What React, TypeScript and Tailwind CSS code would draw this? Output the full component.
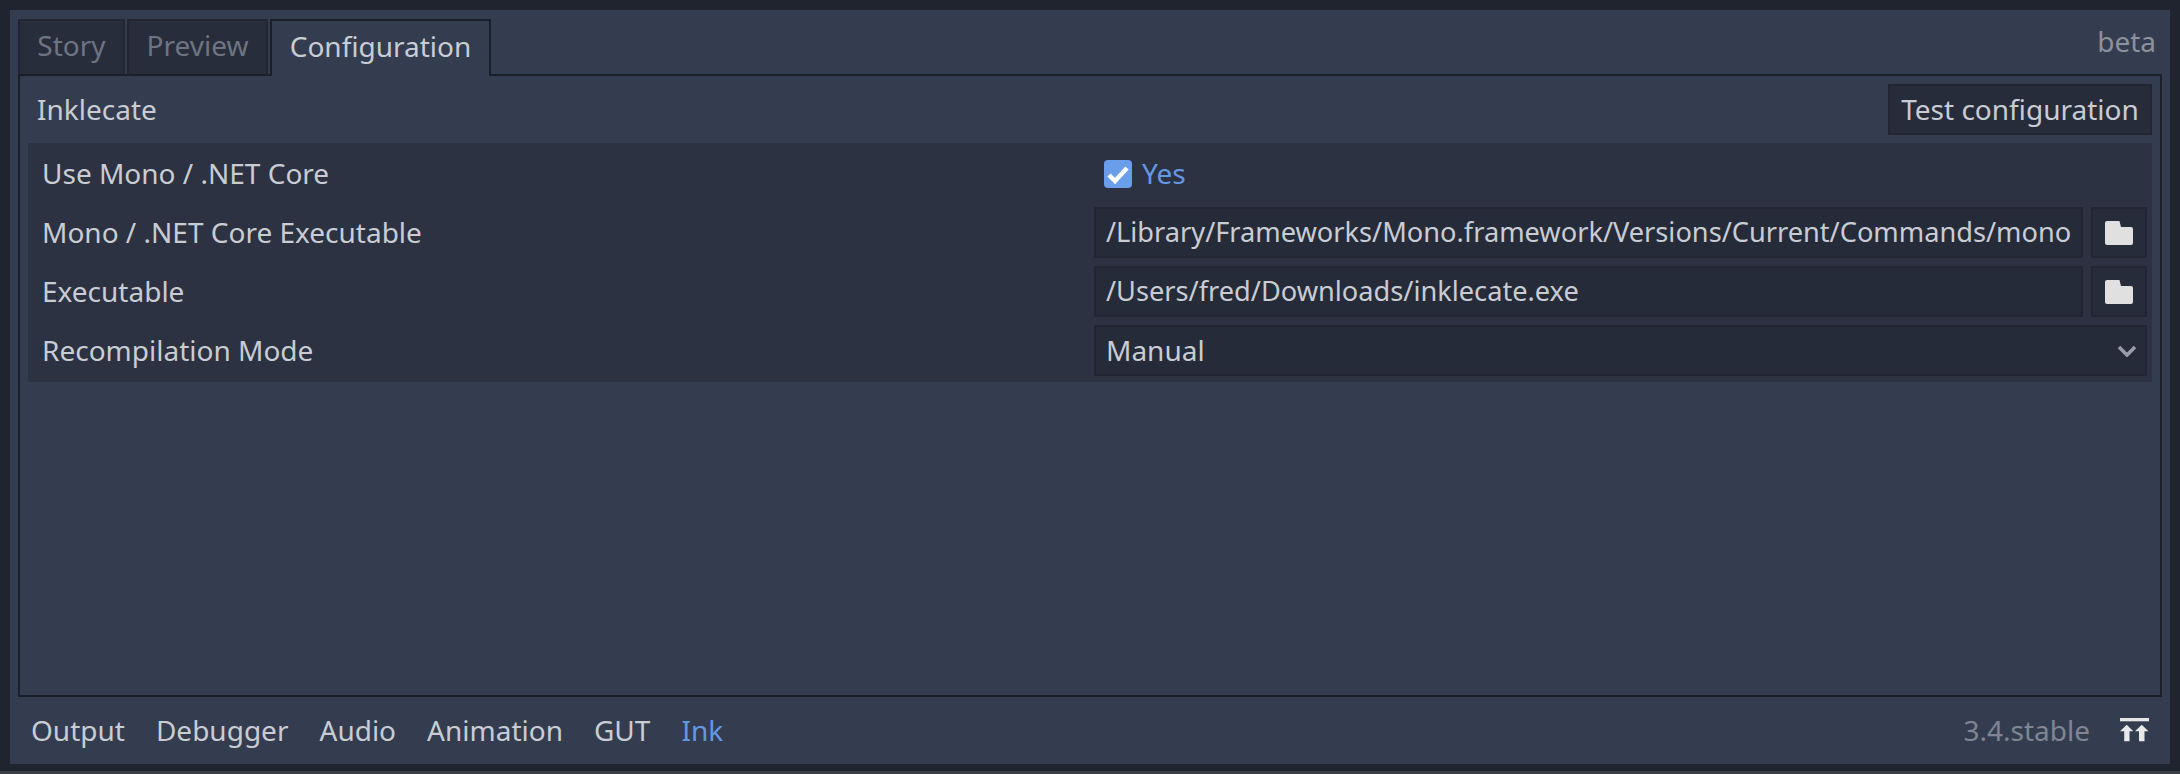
import React from "react";

const Folder = () => (
  <button className="w-[56px] h-[51px] shrink-0 bg-[#272c3b] border-2 border-[#222633] flex items-center justify-center">
    <svg width="28" height="24" viewBox="0 0 28 24"><path d="M0 2a2 2 0 0 1 2-2h12.5l1.5 6h10a2 2 0 0 1 2 2v14a2 2 0 0 1-2 2H2a2 2 0 0 1-2-2z" fill="#e0e0e0" /></svg>
  </button>
);

const Row = ({ label, children }: { label: string; children: React.ReactNode }) => (
  <div className="flex items-center h-[51px]">
    <div className="w-[1066px] shrink-0 pl-[14px] pb-[2px]">{label}</div>
    <div className="flex-1 min-w-0 flex gap-[8px] items-center">{children}</div>
  </div>
);

const Field = ({ children }: { children: React.ReactNode }) => (
  <div className="flex-1 min-w-0 h-[51px] bg-[#262b3a] border-2 border-[#222633] flex items-center pl-[10px] overflow-hidden whitespace-nowrap text-[27.2px]">{children}</div>
);

export default function App() {
  return (
    <div className="w-[2180px] h-[774px] flex flex-col text-[28px] text-[#c9ccd3] overflow-hidden" style={{ fontFamily: '"Noto Sans", sans-serif' }}>
      <div className="h-[771px] bg-[#20242f] pt-[10px] pl-[10px] pr-[10px] pb-[7px] flex">
        <div className="flex-1 flex flex-col bg-[#343d50] px-[8px] pt-[9px]">
          <div className="flex h-[57px] -mb-[2px] relative z-10 justify-between">
            <div className="flex">
              <div className="h-[57px] w-[107px] bg-[#282d3c] border-2 border-[#222633] border-b-[#1b1f2a] text-[#6e7482] flex items-center justify-center pb-[6px]">Story</div>
              <div className="h-[57px] w-[141px] ml-[2px] bg-[#282d3c] border-2 border-[#222633] border-b-[#1b1f2a] text-[#6e7482] flex items-center justify-center pb-[6px]">Preview</div>
              <div className="h-[57px] w-[221px] ml-[2px] bg-[#343d50] border-2 border-b-0 border-[#1b1f2a] flex items-center justify-center pb-[5px]">Configuration</div>
            </div>
            <div className="text-[#8c919d] pr-[6px] pt-[1px]">beta</div>
          </div>
          <div className="h-[623px] shrink-0 border-2 border-[#1b1f2a] flex flex-col pl-[8px] pr-[8px] pt-[8px]">
            <div className="flex items-center justify-between h-[51px] mb-[8px] pl-[9px]">
              <span className="pb-[2px]">Inklecate</span>
              <button className="h-[51px] w-[264px] bg-[#272c3b] border-2 border-[#222633] pb-[2px]">Test configuration</button>
            </div>
            <div className="bg-[#2c3241] flex flex-col gap-[8px] pt-[5px] pb-[6px] pr-[5px]">
              <Row label="Use Mono / .NET Core">
                <div className="flex items-center pl-[10px] text-[#6398e4]">
                  <span className="w-[28px] h-[28px] rounded-[4px] bg-[#6b9eea] flex items-center justify-center mr-[10px]">
                    <svg width="28" height="28" viewBox="0 0 28 28"><path d="M5 15l6 6L23 8" fill="none" stroke="#ffffff" strokeWidth="4.5" /></svg>
                  </span>
                  <span className="pb-[2px]">Yes</span>
                </div>
              </Row>
              <Row label="Mono / .NET Core Executable">
                <Field>/Library/Frameworks/Mono.framework/Versions/Current/Commands/mono</Field>
                <Folder />
              </Row>
              <Row label="Executable">
                <Field>/Users/fred/Downloads/inklecate.exe</Field>
                <Folder />
              </Row>
              <Row label="Recompilation Mode">
                <div className="flex-1 h-[51px] bg-[#262b3a] border-2 border-[#222633] flex items-center justify-between pl-[10px] pr-[8px]">
                  <span className="pb-[2px]">Manual</span>
                  <svg width="20" height="12" viewBox="0 0 20 12"><path d="M2 2l8 8 8-8" fill="none" stroke="#9a9da6" strokeWidth="3.5" /></svg>
                </div>
              </Row>
            </div>
          </div>
          <div className="flex items-center justify-between flex-1 pl-[13px] pr-[13px]">
            <div className="flex gap-[31px] pb-[2px]">
              <span>Output</span><span>Debugger</span><span>Audio</span><span>Animation</span><span>GUT</span><span className="text-[#6398e4]">Ink</span>
            </div>
            <div className="flex items-center gap-[30px]">
              <span className="text-[#7f8592] pb-[2px]">3.4.stable</span>
              <svg className="mb-[2px]" width="29" height="24" viewBox="0 0 29 24" fill="#e8e8e8">
                <rect x="0" y="0" width="29" height="3.3" />
                <path d="M6.7 6.7l6.6 6.6H9.5v10H4.2v-10H0zM21.7 6.7l6.8 6.6h-4v10H19v-10h-4z" />
              </svg>
            </div>
          </div>
        </div>
      </div>
      <div className="h-[3px] bg-[#3d3f44]" />
    </div>
  );
}
